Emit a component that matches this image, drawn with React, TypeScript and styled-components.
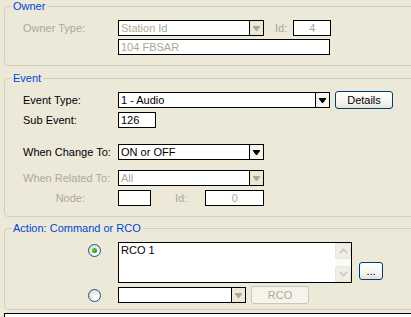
import styled, { createGlobalStyle } from "styled-components";

const GlobalStyle = createGlobalStyle`
  html, body {
    margin: 0;
    padding: 0;
    background: #ece9d8;
    overflow: hidden;
  }
  body {
    font-family: "Liberation Sans", Arial, sans-serif;
    font-size: 11px;
    color: #000;
  }
`;

interface DisabledProps {
  disabled?: boolean;
}

interface WidthProps {
  w: number;
}

const Page = styled.div`
  width: 411px;
  height: 317px;
  overflow: hidden;
  display: flex;
  flex-direction: column;
`;

const Group = styled.fieldset<{ gap: number; pb: number }>`
  margin: ${(p) => p.gap}px 0 0 4px;
  padding: 0 0 ${(p) => p.pb}px 18px;
  width: 480px;
  min-width: 0;
  box-sizing: border-box;
  border: 1px solid #d0d0bf;
  border-radius: 4px;
`;

const Legend = styled.legend`
  margin-left: -12px;
  padding: 0 2px;
  line-height: 13px;
  height: 13px;
  color: #0046d5;
  font-size: 11px;
`;

const Row = styled.div<{ mt: number }>`
  display: flex;
  align-items: center;
  height: 16px;
  margin-top: ${(p) => p.mt}px;
`;

const TallRow = styled.div<{ mt: number }>`
  display: flex;
  align-items: flex-start;
  margin-top: ${(p) => p.mt}px;
`;

const Label = styled.div<DisabledProps & { w?: number; right?: number }>`
  width: ${(p) => (p.w !== undefined ? `${p.w}px` : "auto")};
  flex: none;
  box-sizing: border-box;
  text-align: ${(p) => (p.right !== undefined ? "right" : "left")};
  padding-right: ${(p) => p.right ?? 0}px;
  color: ${(p) => (p.disabled ? "#aca899" : "#000")};
  white-space: nowrap;
  line-height: 16px;
`;

const InlineLabel = styled(Label)<{ ml: number; mr: number }>`
  margin-left: ${(p) => p.ml}px;
  margin-right: ${(p) => p.mr}px;
`;

const TextBox = styled.div<DisabledProps & WidthProps & { center?: boolean }>`
  width: ${(p) => p.w}px;
  height: 16px;
  box-sizing: border-box;
  border: 1px solid #000;
  background: #fff;
  color: ${(p) => (p.disabled ? "#aca899" : "#000")};
  padding: 0 2px;
  line-height: 14px;
  text-align: ${(p) => (p.center ? "center" : "left")};
  white-space: nowrap;
  overflow: hidden;
`;

const Combo = styled.div<DisabledProps & WidthProps>`
  width: ${(p) => p.w}px;
  height: 16px;
  box-sizing: border-box;
  border: 1px solid #000;
  background: #fff;
  display: flex;
  color: ${(p) => (p.disabled ? "#aca899" : "#000")};
`;

const ComboText = styled.div`
  flex: 1;
  padding: 0 2px;
  line-height: 14px;
  white-space: nowrap;
  overflow: hidden;
`;

const DropButton = styled.div<DisabledProps>`
  width: 13px;
  flex: none;
  border-left: 1px solid #000;
  background: ${(p) => (p.disabled ? "#ece9d8" : "#f4f3ee")};
  display: flex;
  align-items: center;
  justify-content: center;
`;

const PushButton = styled.div<DisabledProps & WidthProps & { h: number; ml: number; mt?: number }>`
  width: ${(p) => p.w}px;
  height: ${(p) => p.h}px;
  margin-left: ${(p) => p.ml}px;
  margin-top: ${(p) => p.mt ?? 0}px;
  flex: none;
  box-sizing: border-box;
  border: 1px solid ${(p) => (p.disabled ? "#c9c7ba" : "#003c74")};
  border-radius: 3px;
  background: ${(p) =>
    p.disabled ? "#f5f4ea" : "linear-gradient(#ffffff, #f4f3ee 70%, #e3e1d6)"};
  color: ${(p) => (p.disabled ? "#aca899" : "#000")};
  display: flex;
  align-items: center;
  justify-content: center;
  line-height: 1;
`;

const RadioCell = styled.div<{ mt?: number }>`
  width: 95px;
  flex: none;
  padding-left: 65px;
  padding-top: ${(p) => p.mt ?? 0}px;
  box-sizing: border-box;
`;

const Radio = styled.div<{ checked?: boolean }>`
  width: 13px;
  height: 13px;
  box-sizing: border-box;
  border-radius: 50%;
  border: 1px solid #1c5180;
  background: radial-gradient(circle at 70% 75%, #ffffff 10%, #dcd7cb 90%);
  display: flex;
  align-items: center;
  justify-content: center;
  &::after {
    content: "";
    display: ${(p) => (p.checked ? "block" : "none")};
    width: 5px;
    height: 5px;
    border-radius: 50%;
    background: radial-gradient(circle at 35% 35%, #55d551, #21a121 60%, #1a7e1a);
  }
`;

const Memo = styled.div<WidthProps>`
  width: ${(p) => p.w}px;
  height: 41px;
  box-sizing: border-box;
  border: 1px solid #000;
  background: #fff;
  display: flex;
`;

const MemoText = styled.div`
  flex: 1;
  padding: 1px 2px;
  line-height: 13px;
`;

const ScrollBar = styled.div`
  width: 16px;
  flex: none;
  background: #fbfbf8;
  display: flex;
  flex-direction: column;
  justify-content: space-between;
`;

const ScrollButton = styled.div`
  height: 16px;
  box-sizing: border-box;
  border: 1px solid #e8e6da;
  border-radius: 2px;
  background: #f1efe5;
  display: flex;
  align-items: center;
  justify-content: center;
`;

const BottomBox = styled.div`
  margin: 3px 0 0 4px;
  width: 480px;
  height: 30px;
  flex: none;
  border: 1px solid #000;
  background: #fff;
`;

const Arrow = ({ disabled }: DisabledProps) => (
  <svg width="7" height="5" viewBox="0 0 7 5">
    <polygon points="0,0 7,0 7,1 4,5 3,5 0,1" fill={disabled ? "#aca899" : "#000"} />
  </svg>
);

const Chevron = ({ up }: { up?: boolean }) => (
  <svg width="9" height="6" viewBox="0 0 9 6">
    <polyline
      points={up ? "1,5 4.5,1.5 8,5" : "1,1 4.5,4.5 8,1"}
      fill="none"
      stroke="#c9c7ba"
      strokeWidth="1.6"
    />
  </svg>
);

const ComboBox = ({ w, text, disabled }: { w: number; text: string; disabled?: boolean }) => (
  <Combo w={w} disabled={disabled}>
    <ComboText>{text}</ComboText>
    <DropButton disabled={disabled}>
      <Arrow disabled={disabled} />
    </DropButton>
  </Combo>
);

const App = () => {
  return (
    <Page>
      <GlobalStyle />

      <Group gap={0} pb={10}>
        <Legend>Owner</Legend>
        <Row mt={7}>
          <Label w={95} disabled>
            Owner Type:
          </Label>
          <ComboBox w={146} text="Station Id" disabled />
          <InlineLabel ml={11} mr={6} disabled>
            Id:
          </InlineLabel>
          <TextBox w={38} center disabled>
            4
          </TextBox>
        </Row>
        <Row mt={3}>
          <Label w={95} />
          <TextBox w={212} disabled>
            104 FBSAR
          </TextBox>
        </Row>
      </Group>

      <Group gap={6} pb={10}>
        <Legend>Event</Legend>
        <Row mt={7}>
          <Label w={95}>Event Type:</Label>
          <ComboBox w={212} text="1 - Audio" />
          <PushButton w={58} h={18} ml={5}>
            Details
          </PushButton>
        </Row>
        <Row mt={4}>
          <Label w={95}>Sub Event:</Label>
          <TextBox w={38}>126</TextBox>
        </Row>
        <Row mt={16}>
          <Label w={95}>When Change To:</Label>
          <ComboBox w={146} text="ON or OFF" />
        </Row>
        <Row mt={10}>
          <Label w={95} disabled>
            When Related To:
          </Label>
          <ComboBox w={146} text="All" disabled />
        </Row>
        <Row mt={4}>
          <Label w={95} right={33} disabled>
            Node:
          </Label>
          <TextBox w={33} />
          <InlineLabel ml={24} mr={18} disabled>
            Id:
          </InlineLabel>
          <TextBox w={59} center disabled>
            0
          </TextBox>
        </Row>
      </Group>

      <Group gap={5} pb={6}>
        <Legend>Action: Command or RCO</Legend>
        <TallRow mt={7}>
          <RadioCell mt={2}>
            <Radio checked />
          </RadioCell>
          <Memo w={234}>
            <MemoText>RCO 1</MemoText>
            <ScrollBar>
              <ScrollButton>
                <Chevron up />
              </ScrollButton>
              <ScrollButton>
                <Chevron />
              </ScrollButton>
            </ScrollBar>
          </Memo>
          <PushButton w={24} h={18} ml={7} mt={20}>
            ...
          </PushButton>
        </TallRow>
        <Row mt={4}>
          <RadioCell>
            <Radio />
          </RadioCell>
          <ComboBox w={128} text="" disabled />
          <PushButton w={58} h={18} ml={5} disabled>
            RCO
          </PushButton>
        </Row>
      </Group>

      <BottomBox />
    </Page>
  );
};

export default App;
